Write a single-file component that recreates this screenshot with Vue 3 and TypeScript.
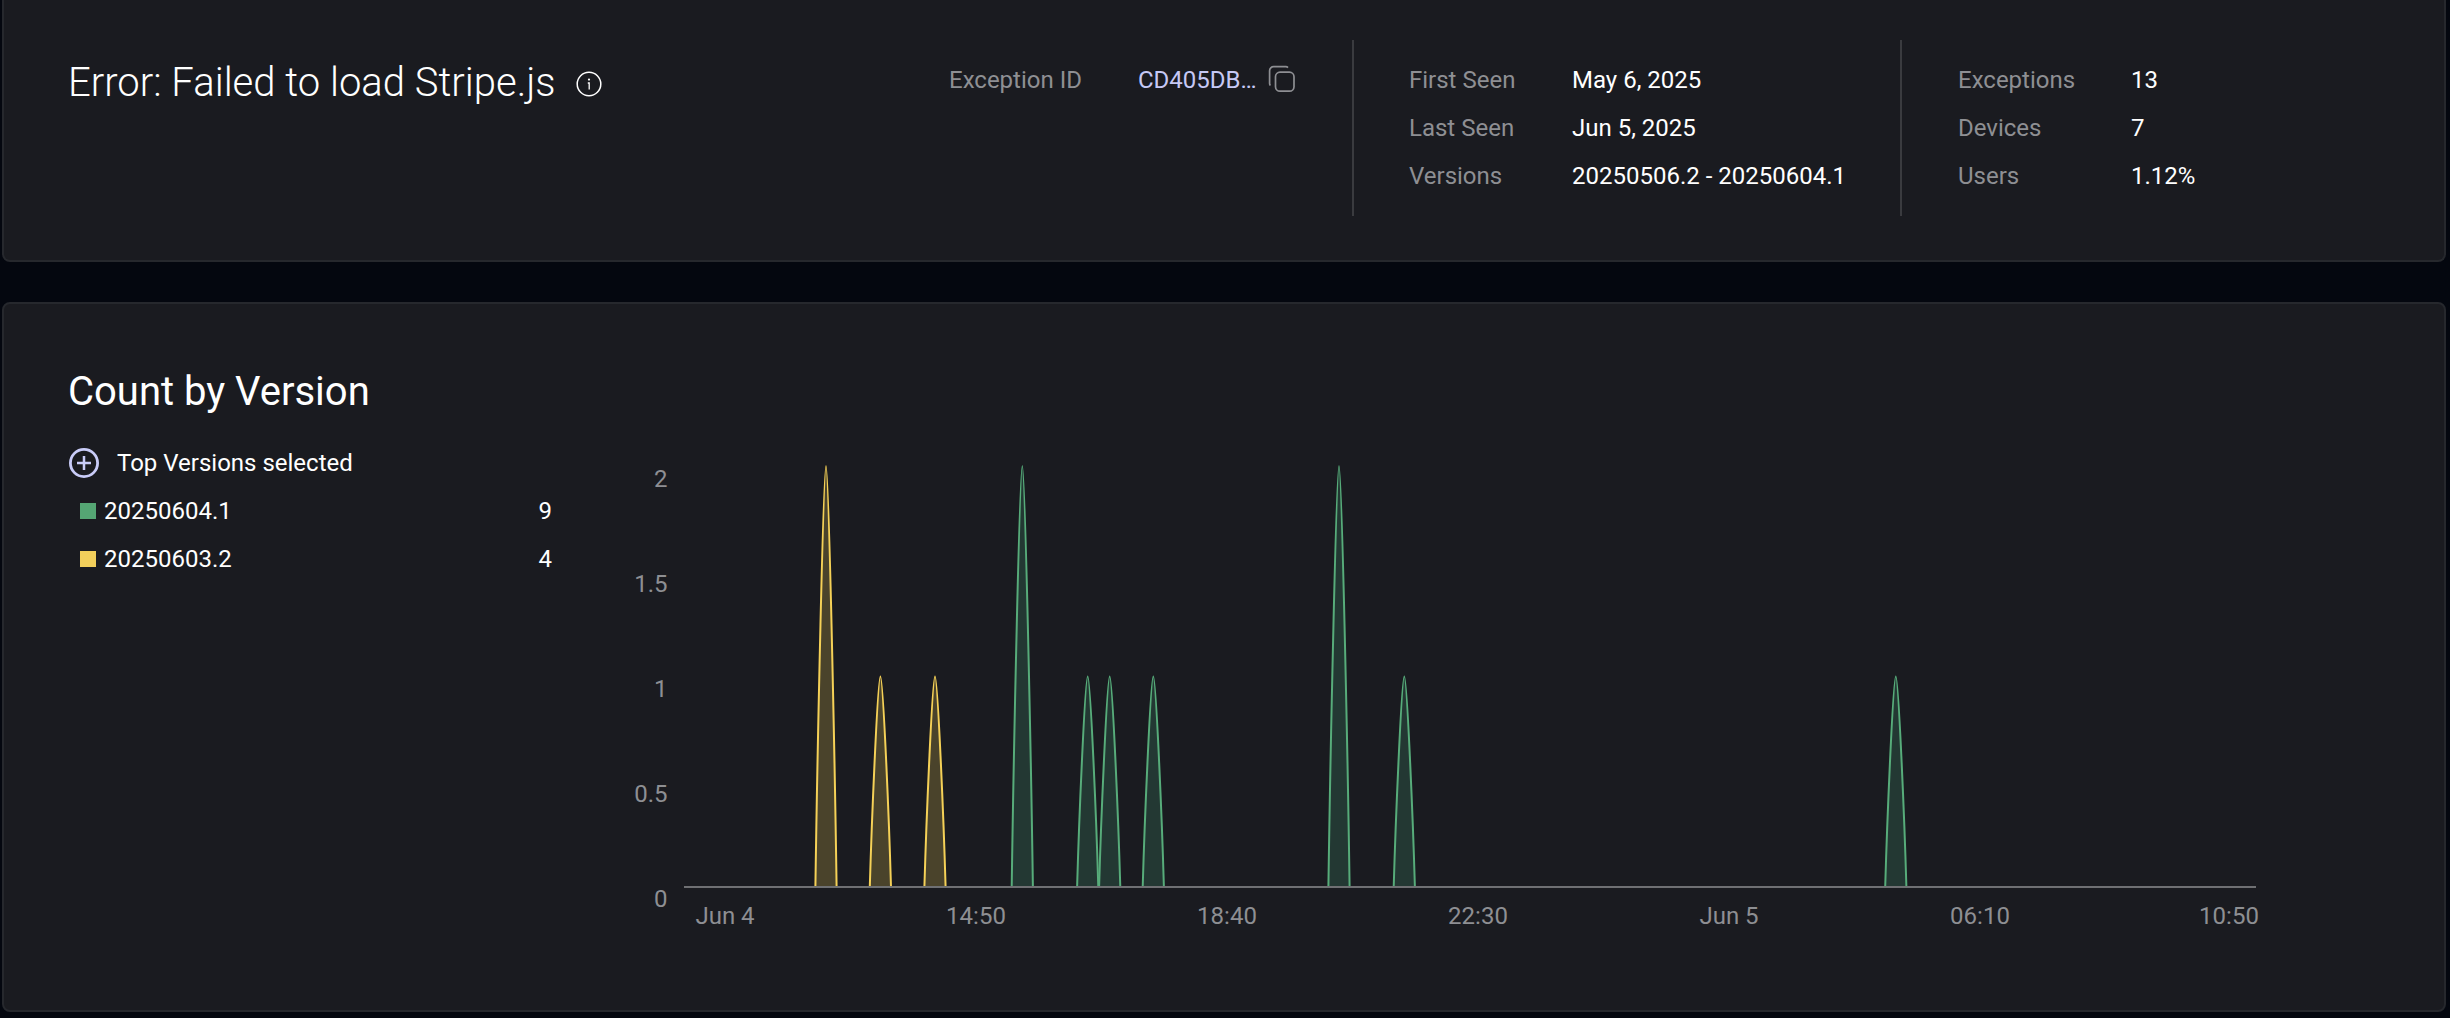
<script setup lang="ts">
interface Row { label: string; value: string }
interface Peak { x: number; v: number }

const seen: Row[] = [
  { label: 'First Seen', value: 'May 6, 2025' },
  { label: 'Last Seen', value: 'Jun 5, 2025' },
  { label: 'Versions', value: '20250506.2 - 20250604.1' },
]
const counts: Row[] = [
  { label: 'Exceptions', value: '13' },
  { label: 'Devices', value: '7' },
  { label: 'Users', value: '1.12%' },
]
const legend = [
  { name: '20250604.1', count: 9, color: '#55a674' },
  { name: '20250603.2', count: 4, color: '#f2cf5b' },
]

const BASE = 887
const UNIT = 210.5
const yTicks = [
  { t: '2', y: 487 },
  { t: '1.5', y: 592 },
  { t: '1', y: 697 },
  { t: '0.5', y: 802 },
  { t: '0', y: 907 },
]
const xTicks = [
  { t: 'Jun 4', x: 725 },
  { t: '14:50', x: 976 },
  { t: '18:40', x: 1227 },
  { t: '22:30', x: 1478 },
  { t: 'Jun 5', x: 1729 },
  { t: '06:10', x: 1980 },
  { t: '10:50', x: 2229 },
]
const yellow: Peak[] = [
  { x: 826, v: 2 },
  { x: 880.4, v: 1 },
  { x: 935, v: 1 },
]
const green: Peak[] = [
  { x: 1022.3, v: 2 },
  { x: 1087.7, v: 1 },
  { x: 1109.7, v: 1 },
  { x: 1153.3, v: 1 },
  { x: 1339, v: 2 },
  { x: 1404.3, v: 1 },
  { x: 1895.8, v: 1 },
]

function peakPath(p: Peak): string {
  const h = p.v * UNIT
  const top = BASE - h
  const c1 = BASE - 0.33 * h
  return (
    `M${p.x - 10.6} ${BASE} C${p.x - 8.6} ${c1} ${p.x - 2.6} ${top} ${p.x} ${top} ` +
    `C${p.x + 2.6} ${top} ${p.x + 8.6} ${c1} ${p.x + 10.6} ${BASE}`
  )
}
</script>

<template>
  <div class="page">
    <section class="panel head">
      <div class="title-block">
        <h1 class="title">Error: Failed to load Stripe.js</h1>
        <svg class="info" viewBox="0 0 26 26" fill="none">
          <circle cx="13" cy="13" r="11.8" stroke="#fff" stroke-width="1.5" />
          <circle cx="13" cy="8.6" r="1.1" fill="#fff" />
          <path d="M11.8 12h1.4v6.4" stroke="#fff" stroke-width="1.3" />
        </svg>
      </div>
      <div class="meta meta-id">
        <div class="row id-row">
          <span class="label">Exception ID</span>
          <span class="id">CD405DB…</span>
          <svg class="copy" viewBox="0 0 28 28" fill="none" stroke="#8e8f93" stroke-width="1.7">
            <path d="M2.4 20.5a3 3 0 0 1-.8-2V5.7a4 4 0 0 1 4-4h12.2a3 3 0 0 1 2.2.9" />
            <rect x="7.5" y="7.2" width="18.5" height="19" rx="4.5" />
          </svg>
        </div>
      </div>
      <div class="meta meta-seen">
        <div v-for="r in seen" :key="r.label" class="row">
          <span class="label">{{ r.label }}</span>
          <span class="value">{{ r.value }}</span>
        </div>
      </div>
      <div class="meta meta-count">
        <div v-for="r in counts" :key="r.label" class="row">
          <span class="label">{{ r.label }}</span>
          <span class="value">{{ r.value }}</span>
        </div>
      </div>
    </section>

    <section class="panel body">
      <h2 class="heading">Count by Version</h2>
      <div class="content">
        <div class="legend">
          <div class="top-row">
            <svg class="plus" viewBox="0 0 30 30" fill="none" stroke="#c9ccf8">
              <circle cx="15" cy="15" r="13.6" stroke-width="2.8" />
              <path d="M15 8v14M8 15h14" stroke-width="2.5" />
            </svg>
            <span>Top Versions selected</span>
          </div>
          <div v-for="l in legend" :key="l.name" class="legend-row">
            <i class="swatch" :style="{ background: l.color }"></i>
            <span class="name">{{ l.name }}</span>
            <span class="count">{{ l.count }}</span>
          </div>
        </div>
        <svg class="chart" viewBox="610 439 1670 500">
          <text v-for="t in yTicks" :key="t.t" class="tick" x="667.5" :y="t.y" text-anchor="end">{{ t.t }}</text>
          <text v-for="t in xTicks" :key="t.t" class="tick" :x="t.x" y="923.5" text-anchor="middle">{{ t.t }}</text>
          <g fill="#4a432b" stroke="#f5d157" stroke-width="2">
            <path v-for="p in yellow" :key="p.x" :d="peakPath(p)" />
          </g>
          <g fill="#233833" stroke="#57ac7a" stroke-width="2">
            <path v-for="p in green" :key="p.x" :d="peakPath(p)" />
          </g>
          <line x1="684" x2="2256" y1="887" y2="887" stroke="#6f7073" stroke-width="1.8" />
        </svg>
      </div>
    </section>
  </div>
</template>

<style>
html,
body {
  margin: 0;
  background: #04070f;
}
</style>

<style scoped>
.page {
  box-sizing: border-box;
  width: 2450px;
  height: 1018px;
  overflow: hidden;
  padding: 0 4px 0 2px;
  background: #04070f;
  color: #fff;
  font-family: Roboto, "Liberation Sans", sans-serif;
  font-size: 24px;
}
.panel {
  box-sizing: border-box;
  background: #1a1b20;
  border: 2px solid #26282d;
  border-radius: 8px;
}
.head {
  display: flex;
  height: 262px;
  padding: 40px 0 0 64px;
  border-top: 0;
  border-radius: 0 0 8px 8px;
  margin-bottom: 40px;
}
.title-block {
  display: flex;
  align-items: flex-start;
  width: 881px;
  flex: none;
}
.title {
  margin: 0;
  padding-top: 19px;
  font-size: 40px;
  line-height: 48px;
  font-weight: 300;
}
.info {
  width: 26px;
  height: 26px;
  margin: 31px 0 0 20px;
}
.meta {
  box-sizing: border-box;
  height: 176px;
  padding-top: 16px;
  flex: none;
}
.meta-id {
  width: 405px;
  border-right: 2px solid #3a3b3f;
}
.meta-seen {
  width: 548px;
  padding-left: 55px;
  border-right: 2px solid #3a3b3f;
}
.meta-count {
  padding-left: 56px;
}
.row {
  display: grid;
  height: 48px;
  line-height: 48px;
  white-space: nowrap;
}
.meta-seen .row {
  grid-template-columns: 163px auto;
}
.meta-count .row {
  grid-template-columns: 173px auto;
}
.id-row {
  grid-template-columns: 189px 130px auto;
  align-items: center;
}
.label {
  color: #8e8f93;
}
.value {
  color: #fff;
}
.id {
  color: #c6c9f5;
}
.copy {
  width: 28px;
  height: 28px;
  margin-top: -2px;
}
.body {
  height: 710px;
  padding: 64px 0 0 64px;
}
.heading {
  margin: 0 0 23px;
  font-size: 40px;
  line-height: 48px;
  font-weight: 400;
}
.content {
  display: flex;
  align-items: flex-start;
}
.legend {
  width: 484px;
  margin-right: 58px;
  flex: none;
}
.top-row {
  display: flex;
  align-items: center;
  gap: 18px;
  height: 48px;
  padding-left: 1px;
}
.plus {
  width: 30px;
  height: 30px;
}
.legend-row {
  display: flex;
  align-items: center;
  height: 48px;
  padding-left: 12px;
}
.swatch {
  width: 16px;
  height: 16px;
  margin-right: 8px;
}
.name {
  flex: 1;
}
.chart {
  width: 1670px;
  height: 500px;
  flex: none;
}
.tick {
  fill: #8e8f93;
  font-family: Roboto, "Liberation Sans", sans-serif;
  font-size: 24px;
}
</style>
